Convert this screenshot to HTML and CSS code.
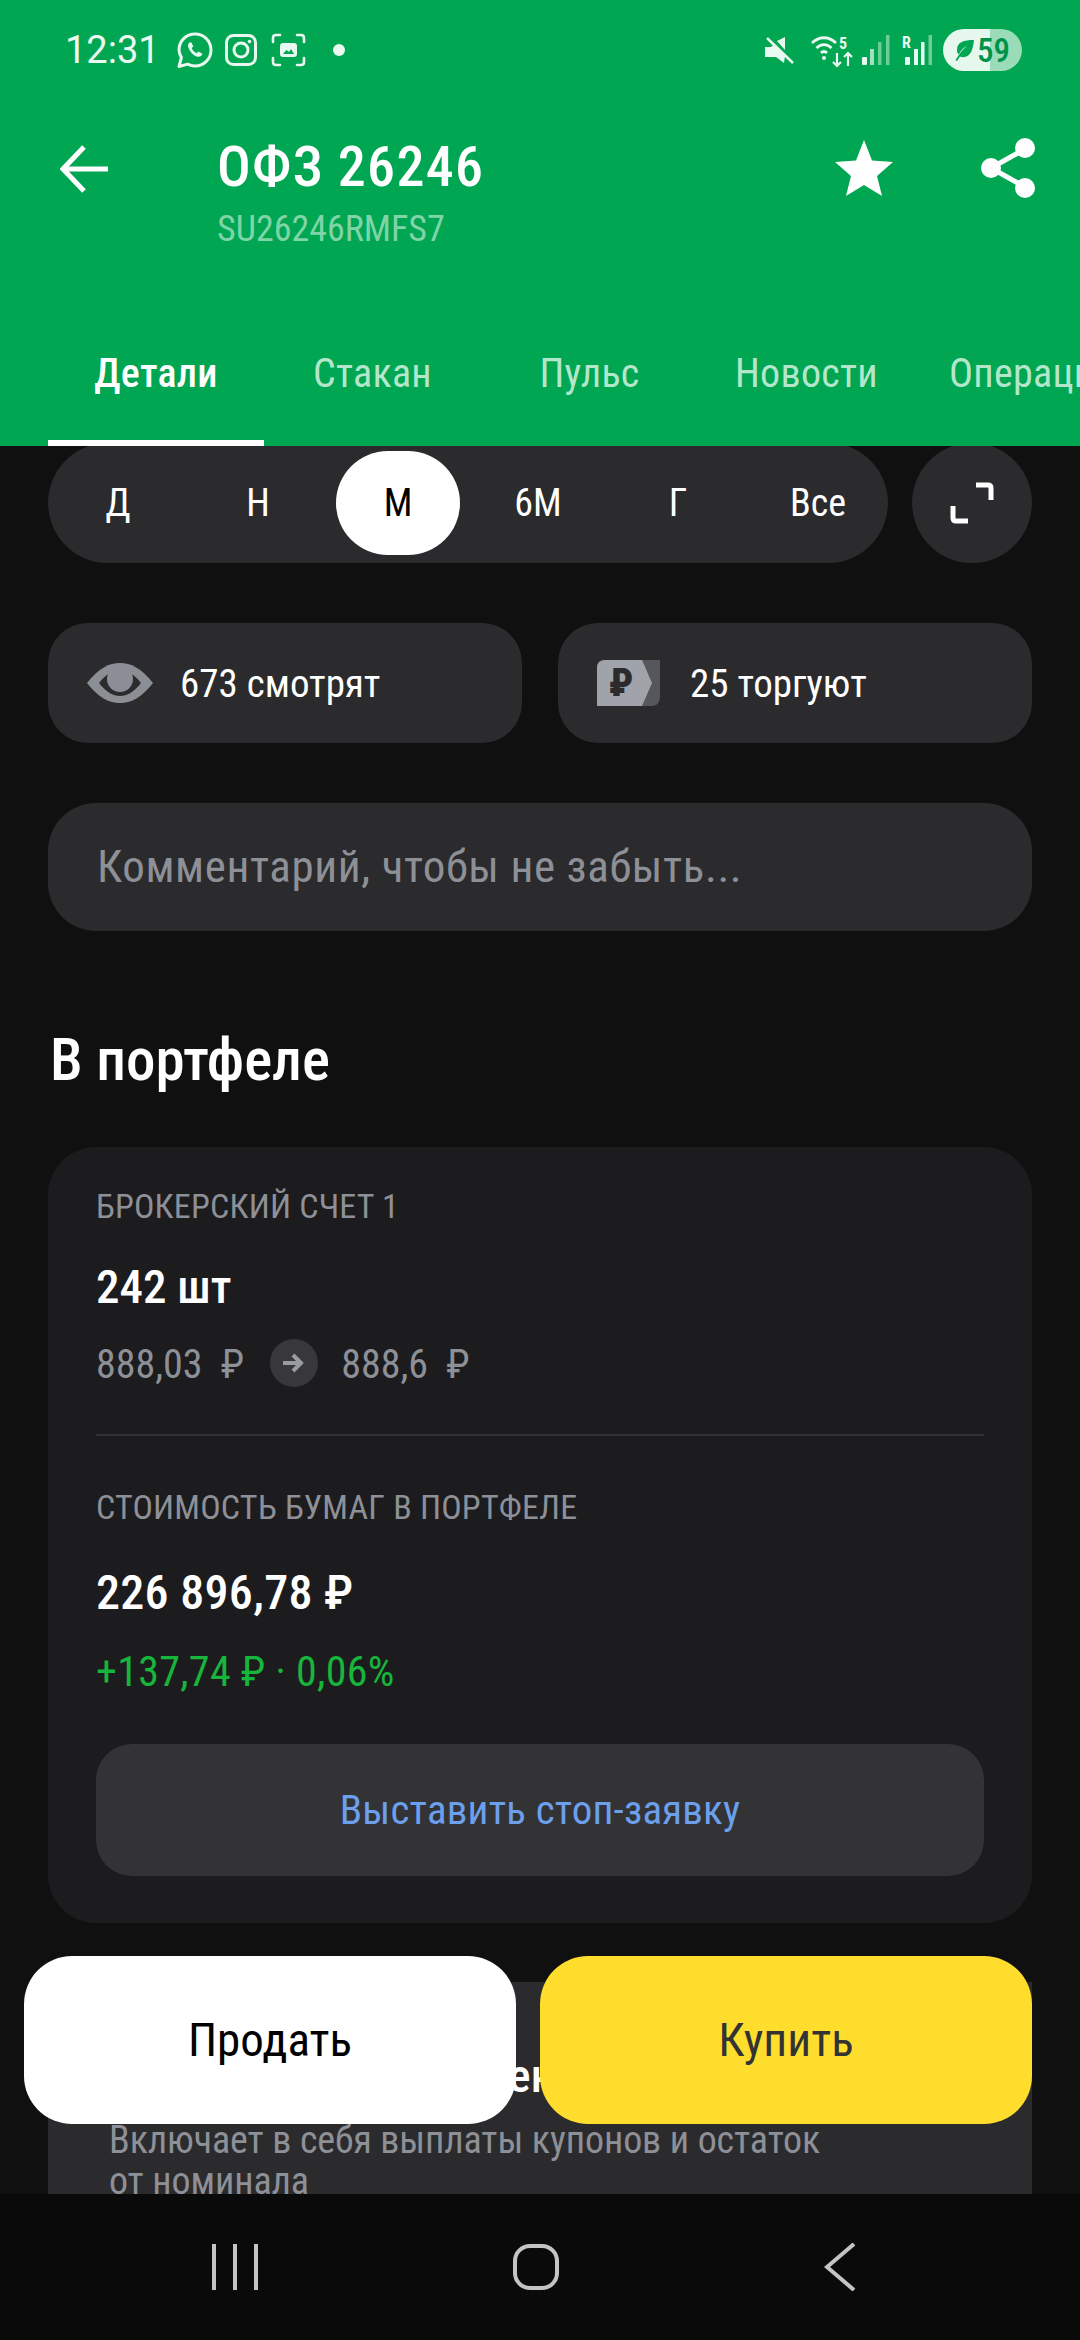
FILE: index.html
```html
<!DOCTYPE html>
<html lang="ru">
<head>
    <meta charset="UTF-8">
    <meta name="viewport" content="width=device-width, initial-scale=1.0">
    <title>ОФЗ 26246</title>
    <link rel="stylesheet" href="styles.css">
</head>
<body>
<div class="screen">

    <!-- Green top area -->
    <div class="top">
        <div class="status-bar">
            <span class="time">12:31</span>
            <svg class="st-whatsapp" viewBox="0 0 36 36" fill="none" stroke="#e9f8f0" stroke-width="3">
                <path d="M2 34.500l2.400-9C3 23 2 20.500 2 18 2 9 9.200 2 18 2s16 7 16 16-7.200 16-16 16c-2.700 0-5.200-.7-7.400-1.900z" stroke-linejoin="round"/>
                <path d="M12.500 10.500c-2 1.500-2 4 0 7.500 2.300 4 5.500 6.500 8.500 6.800 2.200.2 4-1 4.400-3l-4-2.300-1.700 1.800c-2-.8-4.200-3-5-5.200l1.600-1.500-1.800-4.100z" fill="#e9f8f0" stroke="none"/>
            </svg>
            <svg class="st-insta" viewBox="0 0 32 32" fill="none" stroke="#e9f8f0" stroke-width="3">
                <rect x="1.500" y="1.500" width="29" height="29" rx="7"/>
                <circle cx="16" cy="16" r="7"/>
                <circle cx="24.500" cy="7.500" r="1.800" fill="#e9f8f0" stroke="none"/>
            </svg>
            <svg class="st-shot" viewBox="0 0 35 34" fill="none" stroke="#e9f8f0" stroke-width="2.600" stroke-linecap="round">
                <path d="M2 9V5q0-3 3-3h4M26 2h4q3 0 3 3v4M33 25v4q0 3-3 3h-4M9 32H5q-3 0-3-3v-4"/>
                <rect x="9" y="10" width="17" height="14" rx="3" fill="#e9f8f0" stroke="none"/>
                <path d="M12 21l3.500-4 2.500 2 2-3 3 5z" fill="#00a651" stroke="none"/>
            </svg>
            <span class="st-dot"></span>
            <span class="st-spacer"></span>
            <svg class="st-mute" viewBox="0 0 29 27" fill="#e9f8f0">
                <path d="M0 10h6l3-3 11 12-1 7-8-6H0z"/>
                <path d="M12 4l8-4v13z"/>
                <path d="M2 1l26 25" stroke="#e9f8f0" stroke-width="2.500"/>
            </svg>
            <svg class="st-wifi" viewBox="0 0 46 36" fill="none" stroke="#e9f8f0" stroke-width="2.800">
                <path d="M1 11c7-7 17-7 24 0M5.500 16c4.500-4.500 10.500-4.500 15 0M10 21c2-2 4-2 6 0"/>
                <circle cx="13" cy="26" r="2" fill="#e9f8f0" stroke="none"/>
                <path d="M26 21v13M22 30l4 4 4-4M37 34V21M33 25l4-4 4 4" stroke-width="2.200"/>
                <text x="28" y="17" class="st-small">5</text>
            </svg>
            <svg class="st-signal" viewBox="0 0 28 30">
                <rect x="0" y="22" width="5" height="8" rx="1" fill="#e9f8f0"/>
                <rect x="8" y="14" width="4" height="16" fill="#a6dfbe"/>
                <rect x="16" y="7" width="3.500" height="23" fill="#6fcb97"/>
                <rect x="24" y="0" width="3.500" height="30" fill="#6fcb97"/>
            </svg>
            <svg class="st-signal st-signal-r" viewBox="0 0 30 30">
                <text x="0" y="13" class="st-small">R</text>
                <rect x="3" y="22" width="5" height="8" rx="1" fill="#e9f8f0"/>
                <rect x="12" y="14" width="4" height="16" fill="#e9f8f0"/>
                <rect x="19" y="7" width="3.500" height="23" fill="#e9f8f0"/>
                <rect x="26.500" y="0" width="3.500" height="30" fill="#6fcb97"/>
            </svg>
            <div class="battery">
                <svg class="leaf" viewBox="0 0 22 22" fill="#00a651">
                    <path d="M22 1C12 1 5 3 5 11c0 2 .6 3.400 1.600 4.400C9 11 12 8.500 15 7c-3 2.500-6.500 6-9.500 11l-2 3 1.500 1 3-4.500c1 .5 2 .7 3 .7C19 18 21 10 22 1z"/>
                </svg>
                <span>59</span>
            </div>
        </div>

        <div class="title-bar">
            <svg class="back-icon" viewBox="0 0 48 48" fill="none" stroke="#fff" stroke-width="5">
                <path d="M48 24H4M24 2L3 24l21 22"/>
            </svg>
            <div class="title-text">
                <div class="title">ОФЗ 26246</div>
                <div class="subtitle">SU26246RMFS7</div>
            </div>
            <svg class="star-icon" viewBox="0 0 58 56" fill="#fff">
                <path d="M29 0l8 20.500 21 1.500-16 14 5 20-18-11-18 11 5-20L0 22l21-1.500z"/>
            </svg>
            <svg class="share-icon" viewBox="0 0 54 60" fill="#fff" stroke="#fff" stroke-width="5">
                <path d="M44 11L10 30l34 19" fill="none"/>
                <circle cx="44" cy="10" r="7.500"/>
                <circle cx="10" cy="30" r="7.500"/>
                <circle cx="44" cy="50" r="7.500"/>
            </svg>
        </div>

        <div class="tabs">
            <div class="tab tab-active">Детали</div>
            <div class="tab">Стакан</div>
            <div class="tab">Пульс</div>
            <div class="tab">Новости</div>
            <div class="tab">Операции</div>
        </div>
    </div>

    <!-- Scrolled content -->
    <div class="content">
        <div class="range-row">
            <div class="range">
                <div class="range-item">Д</div>
                <div class="range-item">Н</div>
                <div class="range-item range-active">М</div>
                <div class="range-item">6М</div>
                <div class="range-item">Г</div>
                <div class="range-item">Все</div>
            </div>
            <div class="expand">
                <svg viewBox="0 0 44 42" fill="none" stroke="#fff" stroke-width="5" width="44" height="42">
                    <path d="M26 3h12q3 0 3 3v12M3 24v12q0 3 3 3h12"/>
                </svg>
            </div>
        </div>

        <div class="chips">
            <div class="chip">
                <svg class="eye-icon" viewBox="0 0 66 40">
                    <path d="M0 20C12 5 22 0 33 0s21 5 33 20C54 35 44 40 33 40S12 35 0 20z" fill="#8b8e95"/>
                    <path d="M12 20c7-9 14-13 21-13s14 4 21 13c-7 9-14 13-21 13s-14-4-21-13z" fill="#2b2b2d"/>
                    <circle cx="33" cy="16" r="13" fill="#8b8e95"/>
                </svg>
                <span class="chip-text">673 смотрят</span>
            </div>
            <div class="chip">
                <svg class="rub-icon" viewBox="0 0 63 46">
                    <path d="M20 0h43v37q0 9-9 9H20z" fill="#55575c"/>
                    <path d="M8 0h37l10 23-10 23H0V8q0-8 8-8z" fill="#a0a3aa"/>
                    <text x="24" y="36" class="rub-glyph">₽</text>
                </svg>
                <span class="chip-text">25 торгуют</span>
            </div>
        </div>

        <div class="comment">Комментарий, чтобы не забыть...</div>

        <h2 class="section-title">В портфеле</h2>

        <div class="card">
            <div class="label">БРОКЕРСКИЙ СЧЕТ 1</div>
            <div class="qty">242 шт</div>
            <div class="price-row">
                <span class="price">888,03 ₽</span>
                <span class="arrow-circle">
                    <svg viewBox="0 0 22 20" width="22" height="20" fill="none" stroke="#9a9ca3" stroke-width="4">
                        <path d="M0 10h19M10 2l8 8-8 8"/>
                    </svg>
                </span>
                <span class="price price-next">888,6 ₽</span>
            </div>
            <div class="divider"></div>
            <div class="label label-value">СТОИМОСТЬ БУМАГ В ПОРТФЕЛЕ</div>
            <div class="value">226 896,78 ₽</div>
            <div class="profit">+137,74 ₽ · 0,06%</div>
            <div class="stop-btn">Выставить стоп-заявку</div>
        </div>

        <div class="card-next">
            <div class="next-title">Доходность к погашению</div>
            <div class="next-text">Включает в себя выплаты купонов и остаток<br>от номинала</div>
        </div>
    </div>

    <!-- Floating buy / sell buttons -->
    <div class="actions">
        <div class="action action-sell">Продать</div>
        <div class="action action-buy">Купить</div>
    </div>

    <!-- System navigation -->
    <div class="nav-bar">
        <svg viewBox="0 0 46 46" width="46" height="46" fill="none" stroke="#c4c4c4" stroke-width="4">
            <path d="M2 0v46M23 0v46M44 0v46"/>
        </svg>
        <svg viewBox="0 0 46 46" width="46" height="46" fill="none" stroke="#c4c4c4" stroke-width="4">
            <rect x="2" y="2" width="42" height="42" rx="15"/>
        </svg>
        <svg viewBox="0 0 32 48" width="32" height="48" fill="none" stroke="#c4c4c4" stroke-width="4">
            <path d="M30 1L3 24l27 23"/>
        </svg>
    </div>

</div>
</body>
</html>
```

FILE: styles.css
```css
body {
    margin: 0;
    padding: 0;
    background-color: #101011;
    font-family: Roboto, "Noto Sans", sans-serif;
    font-stretch: 85%;
    color: #fff;
}

.screen {
    position: relative;
    width: 1080px;
    height: 2340px;
    display: flex;
    flex-direction: column;
    overflow: hidden;
}

/* Green top area */
.top {
    position: relative;
    z-index: 1;
    height: 446px;
    flex-shrink: 0;
    background-color: #00a651;
}

.status-bar {
    height: 100px;
    display: flex;
    align-items: center;
    padding-left: 65px;
    padding-right: 58px;
    box-sizing: border-box;
}

.time {
    width: 112px;
    font-size: 38px;
    font-stretch: 100%;
    line-height: 44px;
    color: #eafaf1;
}

.st-whatsapp {
    width: 36px;
    height: 36px;
    margin-right: 12px;
}

.st-insta {
    width: 32px;
    height: 32px;
    margin-right: 14px;
}

.st-shot {
    width: 35px;
    height: 34px;
    margin-right: 27px;
}

.st-dot {
    width: 12px;
    height: 12px;
    border-radius: 50%;
    background-color: #eafaf1;
}

.st-spacer {
    flex: 1;
}

.st-mute {
    width: 29px;
    height: 27px;
    margin-right: 17px;
}

.st-wifi {
    width: 46px;
    height: 36px;
    margin-right: 5px;
}

.st-small {
    font-size: 16px;
    font-weight: 700;
    fill: #eafaf1;
    stroke: none;
}

.st-signal {
    width: 28px;
    height: 30px;
    margin-right: 12px;
}

.st-signal-r {
    width: 30px;
    margin-right: 11px;
}

.battery {
    width: 79px;
    height: 42px;
    display: flex;
    align-items: center;
    box-sizing: border-box;
    padding-left: 9px;
    gap: 3px;
    border-radius: 21px;
    background: linear-gradient(to right, #e6f7ed 60%, #9adcb7 60%);
    color: #00914a;
    font-size: 33px;
    font-weight: 500;
}

.leaf {
    width: 22px;
    height: 22px;
}

.title-bar {
    height: 160px;
    display: flex;
    align-items: flex-start;
    padding-left: 60px;
}

.back-icon {
    width: 48px;
    height: 48px;
    margin-top: 45px;
    margin-right: 109px;
}

.title-text {
    width: 618px;
}

.title {
    margin-top: 36px;
    font-size: 56px;
    line-height: 62px;
    font-weight: 500;
    letter-spacing: 1.3px;
}

.subtitle {
    margin-top: 15px;
    font-size: 36px;
    line-height: 32px;
    color: #7fd4a8;
}

.star-icon {
    width: 58px;
    height: 56px;
    margin-top: 40px;
    margin-right: 88px;
}

.share-icon {
    width: 54px;
    height: 60px;
    margin-top: 38px;
}

.tabs {
    display: flex;
    height: 186px;
    padding-left: 48px;
    box-sizing: border-box;
    overflow: hidden;
    white-space: nowrap;
}

.tab {
    flex-shrink: 0;
    width: 217px;
    height: 186px;
    box-sizing: border-box;
    padding-top: 90px;
    font-size: 40px;
    line-height: 48px;
    letter-spacing: 0.3px;
    text-align: center;
    color: #b4e6cb;
}

.tab:last-child {
    width: auto;
    margin-left: 4px;
    padding-left: 30px;
}

.tab-active {
    width: 216px;
    color: #fff;
    font-weight: 500;
    border-bottom: 6px solid #fff;
}

/* Content */
.content {
    flex: 1;
    min-height: 0;
    padding: 0 48px;
    overflow: hidden;
}

.range-row {
    display: flex;
    gap: 24px;
    margin-top: -3px;
}

.range {
    width: 840px;
    height: 120px;
    display: grid;
    grid-template-columns: repeat(6, 1fr);
    box-sizing: border-box;
    padding: 8px 0;
    border-radius: 60px;
    background-color: #2b2b2d;
}

.range-item {
    display: flex;
    align-items: center;
    justify-content: center;
    font-size: 38px;
}

.range-active {
    margin: 0 8px;
    border-radius: 52px;
    background-color: #fff;
    color: #000;
}

.expand {
    width: 120px;
    height: 120px;
    display: flex;
    align-items: center;
    justify-content: center;
    border-radius: 50%;
    background-color: #2b2b2d;
}

.chips {
    display: flex;
    gap: 36px;
    margin-top: 60px;
}

.chip {
    flex: 1;
    height: 120px;
    display: flex;
    align-items: center;
    box-sizing: border-box;
    padding-left: 39px;
    border-radius: 40px;
    background-color: #2b2b2d;
    font-size: 39px;
}

.chip-text {
    padding-top: 2px;
}

.eye-icon {
    width: 66px;
    height: 40px;
    margin-right: 27px;
}

.rub-icon {
    width: 63px;
    height: 46px;
    margin-right: 30px;
}

.rub-glyph {
    font-size: 38px;
    font-weight: 900;
    fill: #2b2b2d;
    text-anchor: middle;
}

.comment {
    height: 128px;
    margin-top: 60px;
    padding-left: 49px;
    border-radius: 48px;
    background-color: #2b2b2d;
    color: #8e9097;
    font-size: 45px;
    letter-spacing: 0.6px;
    line-height: 128px;
}

.section-title {
    margin: 96px 0 54px 2px;
    font-size: 59px;
    line-height: 66px;
    font-weight: 500;
}

.card {
    box-sizing: border-box;
    height: 776px;
    padding: 37px 48px 0;
    border-radius: 48px;
    background-color: #1c1c1e;
}

.label {
    font-size: 34px;
    line-height: 44px;
    letter-spacing: 0.2px;
    color: #8e9097;
}

.qty {
    margin-top: 35px;
    font-size: 47px;
    line-height: 48px;
    font-weight: 500;
}

.price-row {
    display: flex;
    align-items: center;
    height: 48px;
    margin-top: 28px;
    gap: 26px;
    font-size: 40px;
    word-spacing: 9px;
    color: #8e9097;
}

.price {
    padding-top: 2px;
}

.price-next {
    margin-left: -3px;
}

.arrow-circle {
    width: 48px;
    height: 48px;
    display: flex;
    align-items: center;
    justify-content: center;
    border-radius: 50%;
    background-color: #38383b;
}

.divider {
    height: 2px;
    margin-top: 47px;
    background-color: #323235;
}

.label-value {
    margin-top: 49px;
}

.value {
    margin-top: 40px;
    font-size: 48px;
    line-height: 48px;
    font-weight: 500;
    letter-spacing: 0.3px;
}

.profit {
    margin-top: 33px;
    font-size: 42px;
    line-height: 44px;
    letter-spacing: 0.3px;
    color: #17b53c;
}

.stop-btn {
    height: 132px;
    margin-top: 50px;
    border-radius: 36px;
    background-color: #333336;
    color: #6c9fec;
    font-size: 41px;
    letter-spacing: 0.2px;
    line-height: 132px;
    text-align: center;
}

.card-next {
    margin-top: 59px;
    padding: 70px 61px 0;
    height: 300px;
    background-color: #2b2b2d;
}

.next-title {
    font-size: 47px;
    line-height: 48px;
    font-weight: 500;
}

.next-text {
    margin-top: 20px;
    font-size: 38px;
    line-height: 41px;
    letter-spacing: -0.1px;
    color: #8e9097;
}

/* Floating buttons */
.actions {
    position: absolute;
    left: 24px;
    right: 48px;
    top: 1956px;
    display: flex;
    gap: 24px;
}

.action {
    flex: 1;
    height: 168px;
    border-radius: 48px;
    font-size: 47px;
    line-height: 168px;
    text-align: center;
}

.action-sell {
    background-color: #fff;
    color: #000;
}

.action-buy {
    background-color: #ffdd2d;
    color: #333;
}

/* System navigation */
.nav-bar {
    height: 146px;
    flex-shrink: 0;
    display: grid;
    grid-template-columns: 301px 311px auto;
    align-items: center;
    justify-items: start;
    padding-left: 212px;
    box-sizing: border-box;
    background-color: #0a0a0a;
}
```
